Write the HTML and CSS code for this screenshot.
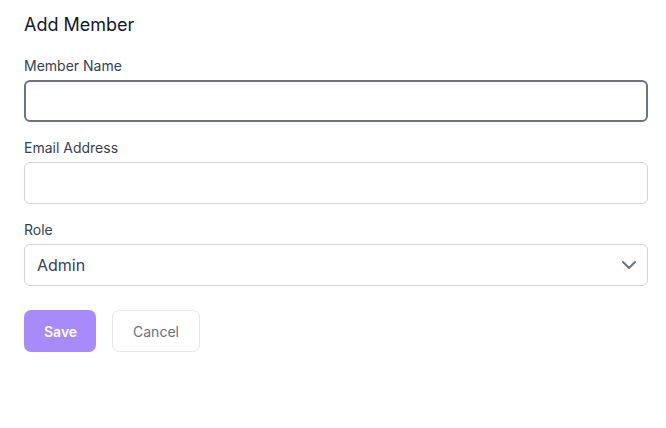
FILE: index.html
```html
<!DOCTYPE html>
<html>
<head>
<meta charset="utf-8">
<link rel="stylesheet" href="styles.css">
</head>
<body>
<form class="form">
  <h2 class="title">Add Member</h2>
  <div class="field">
    <label class="label">Member Name</label>
    <input class="input input-focus" type="text">
  </div>
  <div class="field">
    <label class="label">Email Address</label>
    <input class="input" type="email">
  </div>
  <div class="field">
    <label class="label">Role</label>
    <div class="select">
      <span class="select-value">Admin</span>
      <svg class="chevron" width="14" height="8" viewBox="0 0 14 8" fill="none"><path d="M1 1l6 6 6-6" stroke="#6b7280" stroke-width="2" stroke-linecap="round" stroke-linejoin="round"/></svg>
    </div>
  </div>
  <div class="actions">
    <button type="button" class="btn btn-save">Save</button>
    <button type="button" class="btn btn-cancel">Cancel</button>
  </div>
</form>
</body>
</html>
```

FILE: styles.css
```css
* { box-sizing: border-box; }
html, body { margin: 0; padding: 0; background: #fff; }
body { font-family: Inter, "Noto Sans", sans-serif; color: #111827; }
.form { padding: 11px 18px 24px 24px; display: flex; flex-direction: column; }
.title { margin: 0 0 17px; font-size: 18px; line-height: 28px; font-weight: 400; color: #111827; }
.field { display: flex; flex-direction: column; margin-bottom: 16px; }
.label { font-size: 14px; line-height: 20px; color: #374151; font-weight: 400; margin-bottom: 4px; }
.input { height: 42px; width: 100%; border: 1px solid #d1d5db; border-radius: 6px; background: #fff; outline: none; font: inherit; padding: 0 12px; }
.input-focus { border: 2px solid #6b7280; }
.select { height: 42px; border: 1px solid #d1d5db; border-radius: 6px; display: flex; align-items: center; justify-content: space-between; padding: 0 11px 0 12px; }
.select-value { font-size: 16px; color: #374151; }
.chevron { display: block; }
.actions { display: flex; gap: 16px; margin-top: 8px; }
.btn { height: 42px; border-radius: 7px; font-family: inherit; font-size: 14px; padding: 0 20px; cursor: pointer; }
.btn-save { background: #a78bfa; color: #fff; border: none; font-weight: 600; width: 72px; }
.btn-cancel { background: #fff; color: #6b7280; border: 1px solid #e5e7eb; font-weight: 400; width: 88px; }
```
